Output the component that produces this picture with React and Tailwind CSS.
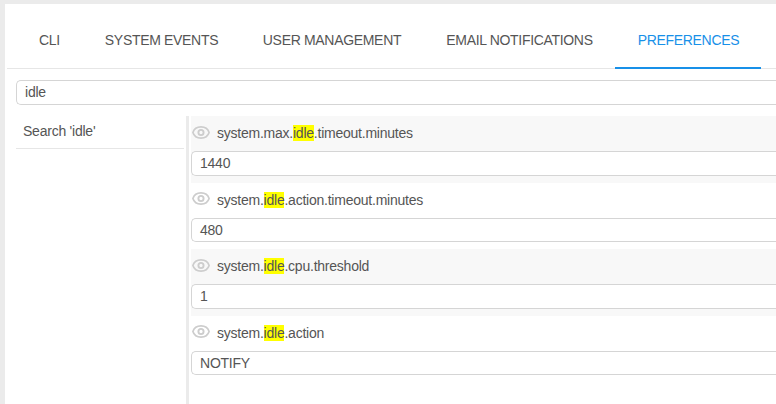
import React from "react";

const tabs = [
  { label: "CLI", width: "w-[66px]" },
  { label: "SYSTEM EVENTS", width: "w-[158px]" },
  { label: "USER MANAGEMENT", width: "w-[183px]" },
  { label: "EMAIL NOTIFICATIONS", width: "w-[192px]" },
  { label: "PREFERENCES", width: "w-[146px]", active: true },
];

const preferences = [
  { before: "system.max.", after: ".timeout.minutes", value: "1440", row: "h-[67px] bg-[#f8f8f8]", icon: "mb-[2px]", input: "h-[25px]" },
  { before: "system.", after: ".action.timeout.minutes", value: "480", row: "h-[66px]", icon: "mb-[4px]", input: "h-[24px]" },
  { before: "system.", after: ".cpu.threshold", value: "1", row: "h-[67px] bg-[#f8f8f8]", icon: "mb-[2px]", input: "h-[25px]" },
  { before: "system.", after: ".action", value: "NOTIFY", row: "h-[66px]", icon: "mb-[4px]", input: "h-[24px]" },
];

function EyeIcon({ className }) {
  return (
    <svg className={`h-[13px] w-[18px] shrink-0 ${className}`} viewBox="0 0 18 13" fill="none" stroke="#cdcdcd">
      <path d="M.9 6.5C2 3 5.2.9 9 .9S16 3 17.1 6.5C16 10 12.8 12.1 9 12.1S2 10 .9 6.5Z" strokeWidth="1.7" />
      <circle cx="9" cy="6.5" r="2.6" strokeWidth="1.9" />
    </svg>
  );
}

function Preference({ before, after, value, row, icon, input }) {
  return (
    <div className={row}>
      <div className="flex h-[35px] items-center pl-[1px]">
        <EyeIcon className={icon} />
        <span className="mb-[2px] ml-[7px] whitespace-nowrap leading-4">
          {before}
          <mark className="bg-[#ffff00] text-inherit">idle</mark>
          {after}
        </span>
      </div>
      <div className={`flex items-center rounded-l-[5px] border border-r-0 border-[#d5d5d5] bg-white pl-2 ${input}`}>
        {value}
      </div>
    </div>
  );
}

export default function App() {
  return (
    <div className="h-[404px] w-[776px] overflow-hidden bg-[#ebebeb] pl-[5px] pt-[4px] font-['Liberation_Sans',Arial,sans-serif] text-[14px] tracking-[-0.235px] text-[#555]">
      <main className="flex h-[400px] flex-col bg-white">
        <nav className="ml-[2px] flex h-[65px] shrink-0 border-b border-[#e6e6e6] pl-[9px] tracking-[-0.32px]">
          {tabs.map((t) => (
            <div
              key={t.label}
              className={`flex h-[65px] shrink-0 items-center justify-center whitespace-nowrap pl-[1px] pt-[10px] ${t.width} ${
                t.active ? "border-b-2 border-[#1890e8] text-[#1890e8]" : "border-b-2 border-transparent"
              }`}
            >
              {t.label}
            </div>
          ))}
        </nav>
        <div className="ml-[11px] mt-[11px] flex h-[25px] shrink-0 items-center rounded-l-[5px] border border-r-0 border-[#d5d5d5] pl-2">
          idle
        </div>
        <div className="mt-[11px] flex flex-1">
          <aside className="ml-[11px] w-[168px] shrink-0">
            <div className="h-[33px] border-b border-[#e6e6e6] pl-[7px] pt-[7px] leading-4">Search 'idle'</div>
          </aside>
          <div className="ml-[2px] w-[3px] shrink-0 bg-[#ebebeb]" />
          <section className="ml-[2px] flex-1">
            {preferences.map((p) => (
              <Preference key={p.value} {...p} />
            ))}
          </section>
        </div>
      </main>
    </div>
  );
}
